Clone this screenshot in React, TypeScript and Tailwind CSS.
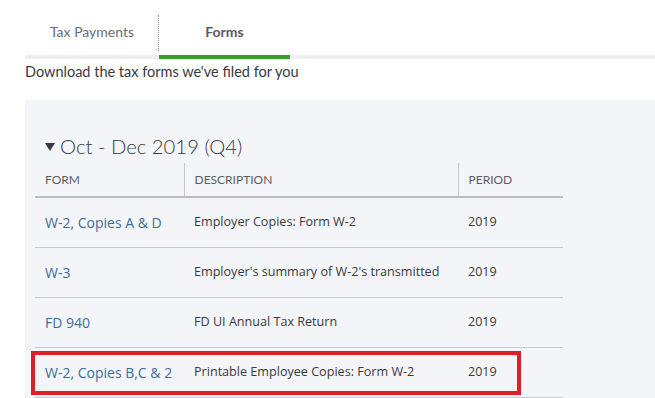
const rows = [
  { form: 'W-2, Copies A & D', description: 'Employer Copies: Form W-2', period: '2019' },
  { form: 'W-3', description: "Employer's summary of W-2's transmitted", period: '2019' },
  { form: 'FD 940', description: 'FD UI Annual Tax Return', period: '2019' },
  { form: 'W-2, Copies B,C & 2', description: 'Printable Employee Copies: Form W-2', period: '2019', marked: true },
];

export default function App() {
  return (
    <div className="w-[655px] h-[398px] overflow-hidden bg-white text-[#393a3d]" style={{ fontFamily: 'Lato, "Open Sans", sans-serif' }}>
      <div className="pl-[25px]">
        <div className="flex border-b-4 border-[#eeeeef] h-[59px]">
          <div className="w-[134px] flex items-center justify-center text-[14px] text-[#6b6c72] pt-[7px] relative">
            Tax Payments
            <span className="absolute right-0 top-[15px] h-[36px] border-r border-dotted border-[#9a9ba0]" />
          </div>
          <div className="w-[131px] flex items-center justify-center text-[14px] font-bold text-[#5a5b60] pt-[7px] relative">
            Forms
            <span className="absolute left-0 right-0 -bottom-[4px] h-[4px] bg-[#3d9b35]" />
          </div>
        </div>
        <p className="text-[14.5px] leading-[18px] mt-[4px] text-[#393a3d]">Download the tax forms we've filed for you</p>

        <div className="mt-[19px] bg-[#f4f5f8] h-[300px] pl-[10px] pt-[32px] relative">
          <h2 className="flex items-center text-[20.3px] leading-[28px] font-light text-[#393a3d] pl-[10px]">
            <svg width="10" height="8" viewBox="0 0 10 8" className="mr-[5px] mt-[2px]">
              <path d="M0 0 H10 L5 8 Z" fill="#393a3d" />
            </svg>
            Oct - Dec 2019 (Q4)
          </h2>
          <table className="w-[528px] mt-[3px] border-collapse text-[12.5px]">
            <thead>
              <tr className="h-[34px] border-b-2 border-[#bcbdc1] text-[#5c5d62] text-[12px] uppercase">
                <th className="w-[149px] text-left font-normal pl-[10px] border-r border-[#c7c8cc]">Form</th>
                <th className="w-[274px] text-left font-normal pl-[10px] border-r border-[#c7c8cc]">Description</th>
                <th className="text-left font-normal pl-[10px]">Period</th>
              </tr>
            </thead>
            <tbody style={{ fontFamily: '"Open Sans", Lato, sans-serif' }}>
              {rows.map((r, i) => (
                <tr key={i} className="h-[50px] border-b border-[#c9cacd]">
                  <td className="pl-[10px] text-[14px] text-[#3b6e9c]">{r.form}</td>
                  <td className="pl-[10px] text-[12.6px] text-[#393a3d]">{r.description}</td>
                  <td className="pl-[10px] text-[12.5px] text-[#393a3d]">{r.period}</td>
                </tr>
              ))}
            </tbody>
          </table>
          <div className="absolute left-[6px] top-[251px] w-[490px] h-[44px] border-4 border-[#e01e28] pointer-events-none" />
        </div>
      </div>
    </div>
  );
}
